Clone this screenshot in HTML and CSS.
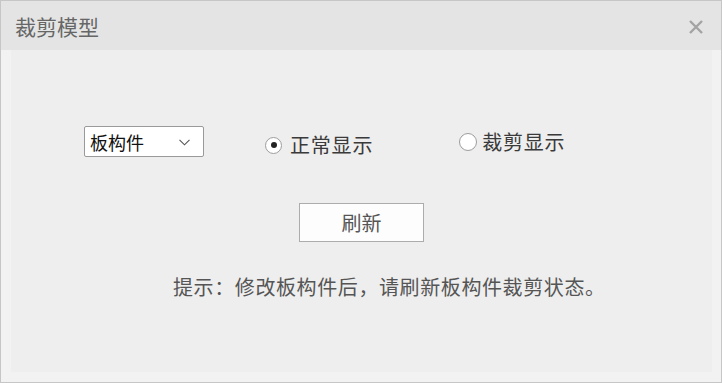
FILE: index.html
```html
<!DOCTYPE html>
<html lang="zh-CN">
<head>
    <meta charset="UTF-8">
    <title>裁剪模型</title>
    <link rel="stylesheet" href="styles.css">
</head>
<body>
    <div class="dialog">
        <!-- Title bar -->
        <div class="titlebar">
            <span class="title">裁剪模型</span>
            <svg class="close" width="14" height="14" viewBox="0 0 14 14">
                <path d="M1 1 L13 13 M13 1 L1 13" stroke="#a3a3a3" stroke-width="2.4" fill="none"/>
            </svg>
        </div>

        <div class="frame">
            <div class="panel">
                <div class="controls">
                    <div class="select">
                        <span>板构件</span>
                        <svg width="11" height="7" viewBox="0 0 11 7">
                            <path d="M0.5 0.8 L5.5 5.8 L10.5 0.8" stroke="#555" stroke-width="1.1" fill="none"/>
                        </svg>
                    </div>
                    <label class="radio radio-normal">
                        <span class="dot checked"></span>正常显示
                    </label>
                    <label class="radio radio-clip">
                        <span class="dot"></span>裁剪显示
                    </label>
                </div>

                <div class="refresh">刷新</div>

                <p class="hint">提示：修改板构件后，请刷新板构件裁剪状态。</p>
            </div>
        </div>
    </div>
</body>
</html>
```

FILE: styles.css
```css
body {
    margin: 0;
    font-family: "Noto Sans CJK SC", "Noto Sans", sans-serif;
    background: #ffffff;
}

.dialog {
    width: 722px;
    height: 383px;
    box-sizing: border-box;
    border: 1px solid #c6c6c6;
    background: #f2f2f2;
    display: flex;
    flex-direction: column;
}

.titlebar {
    height: 49px;
    background: #e4e4e4;
    display: flex;
    align-items: center;
    justify-content: space-between;
    padding: 0 18px 0 14px;
}

.title {
    font-size: 21px;
    color: #666666;
    line-height: 24px;
}

.close {
    display: block;
    margin-top: 2px;
}

.frame {
    flex: 1;
    padding: 0 9px 10px 10px;
    display: flex;
}

.panel {
    flex: 1;
    background: #eeeeee;
    padding: 76px 0 0 73px;
}

.controls {
    display: flex;
    align-items: flex-start;
}

.select {
    width: 120px;
    height: 31px;
    box-sizing: border-box;
    border: 1px solid #9a9a9a;
    border-radius: 2px;
    background: #ffffff;
    display: flex;
    align-items: center;
    justify-content: space-between;
    padding: 0 13px 0 5px;
    font-size: 18px;
    color: #111111;
}

.select svg {
    display: block;
    margin-top: 1px;
}

.radio {
    display: flex;
    align-items: center;
    font-size: 20px;
    line-height: 24px;
    color: #3a3a3a;
    letter-spacing: 0.8px;
}

.radio-normal {
    margin: 7px 0 0 61px;
}

.radio-clip {
    margin: 4px 0 0 86px;
}

.dot {
    width: 17px;
    height: 17px;
    box-sizing: border-box;
    border: 1px solid #9d9d9d;
    border-radius: 50%;
    background: #ffffff;
    margin-right: 8px;
    position: relative;
}

.radio-clip .dot {
    width: 18px;
    height: 18px;
    margin-right: 5px;
}

.dot.checked::after {
    content: "";
    position: absolute;
    left: 4.5px;
    top: 4.5px;
    width: 6px;
    height: 6px;
    border-radius: 50%;
    background: #222222;
}

.refresh {
    width: 125px;
    height: 39px;
    box-sizing: border-box;
    margin: 46px 0 0 215px;
    border: 1px solid #acacac;
    background: #fdfdfd;
    display: flex;
    align-items: center;
    justify-content: center;
    font-size: 20px;
    color: #555555;
}

.hint {
    margin: 33px 0 0 89px;
    font-size: 20px;
    line-height: 24px;
    color: #555555;
    letter-spacing: 0.6px;
}
```
